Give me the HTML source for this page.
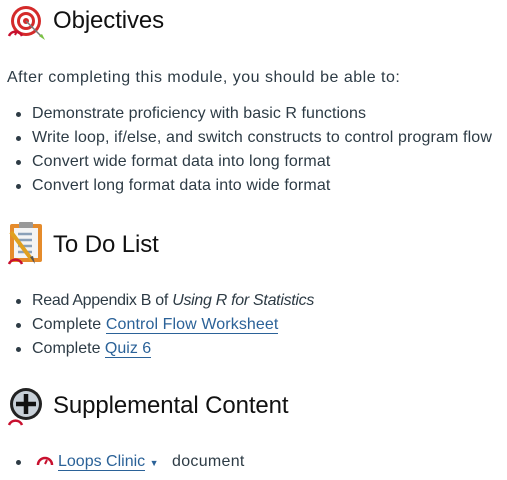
<!DOCTYPE html>
<html><head><style>
body{margin:0;width:507px;height:480px;background:#fff;font-family:"Liberation Sans",sans-serif;color:#2d3b45;position:relative;overflow:hidden}
.t{position:absolute;white-space:nowrap;font-size:16px;letter-spacing:0.1px}
.h{position:absolute;white-space:nowrap;font-size:24px;color:#111;letter-spacing:-0.1px}
.b{position:absolute;width:5px;height:5px;border-radius:50%;background:#2d3b45}
a{color:#2b6298;text-decoration:none;border-bottom:1px solid #2b6298}
</style></head><body>
<svg style="position:absolute;left:6px;top:3px" width="42" height="40" viewBox="0 0 42 40">
<circle cx="20" cy="18" r="15" fill="#d42a2a"/><circle cx="20" cy="18" r="12" fill="#fff"/><circle cx="20" cy="18" r="9" fill="#d42a2a"/><circle cx="20" cy="18" r="6" fill="#fff"/><circle cx="20" cy="18" r="3" fill="#d42a2a"/>
<path d="M20 18 L36 34" stroke="#777" stroke-width="1.5"/><path d="M33 33 L39 37 L36 31Z" fill="#7ac143"/>
<path d="M3 33 A7 7 0 0 1 16 33" stroke="#c8102e" stroke-width="2.5" fill="none"/><path d="M9 32 L11 28" stroke="#c8102e" stroke-width="2"/>
</svg>
<div class="h" style="left:53px;top:7px">Objectives</div>
<div class="t" style="left:7px;top:69px;letter-spacing:0.5px">After completing this module, you should be able to:</div>
<div class="b" style="left:16px;top:112px"></div><div class="t" style="left:32px;top:105px;letter-spacing:0.05px">Demonstrate proficiency with basic R functions</div>
<div class="b" style="left:16px;top:136px"></div><div class="t" style="left:32px;top:129px;letter-spacing:0.13px">Write loop, if/else, and switch constructs to control program flow</div>
<div class="b" style="left:16px;top:160px"></div><div class="t" style="left:32px;top:153px;letter-spacing:0.12px">Convert wide format data into long format</div>
<div class="b" style="left:16px;top:184px"></div><div class="t" style="left:32px;top:177px;letter-spacing:0.12px">Convert long format data into wide format</div>
<svg style="position:absolute;left:6px;top:220px" width="42" height="46" viewBox="0 0 42 46">
<rect x="4" y="4" width="32" height="38" rx="2" fill="#e58b2b"/><rect x="8" y="8" width="24" height="30" fill="#f4f4f4"/><rect x="13" y="2" width="14" height="6" rx="1" fill="#999"/>
<g stroke="#8aa0b8" stroke-width="2.5"><path d="M12 14h14M12 20h14M12 26h14M12 32h14"/></g>
<path d="M5 12 L26 40" stroke="#e0a020" stroke-width="4"/><path d="M24 37 L29 44 L27 36Z" fill="#555"/>
<path d="M3 44 A7 7 0 0 1 16 44" stroke="#c8102e" stroke-width="2.5" fill="none"/>
</svg>
<div class="h" style="left:53px;top:231px">To Do List</div>
<div class="b" style="left:16px;top:299px"></div><div class="t" style="left:32px;top:292px;letter-spacing:-0.3px">Read Appendix B of <i>Using R for Statistics</i></div>
<div class="b" style="left:16px;top:323px"></div><div class="t" style="left:32px;top:316px">Complete <a>Control Flow Worksheet</a></div>
<div class="b" style="left:16px;top:347px"></div><div class="t" style="left:32px;top:340px;letter-spacing:0">Complete <a>Quiz 6</a></div>
<svg style="position:absolute;left:6px;top:386px" width="42" height="40" viewBox="0 0 42 40">
<circle cx="20" cy="18" r="16" fill="#222"/><circle cx="20" cy="18" r="13" fill="#c8d0d8"/><path d="M20 8v20M10 18h20" stroke="#111" stroke-width="4.5"/>
<path d="M3 39 A7 7 0 0 1 16 39" stroke="#c8102e" stroke-width="2.5" fill="none"/>
</svg>
<div class="h" style="left:53px;top:392px">Supplemental Content</div>
<div class="b" style="left:16px;top:460px"></div>
<svg style="position:absolute;left:36px;top:455px" width="18" height="12" viewBox="0 0 18 12"><path d="M2 10 A7 7 0 0 1 16 10" stroke="#c8102e" stroke-width="2.5" fill="none"/><path d="M9 9 L11 5" stroke="#c8102e" stroke-width="2"/></svg>
<div class="t" style="left:58px;top:453px;letter-spacing:0"><a>Loops Clinic</a> <span style="font-size:9px;color:#2b6298">▼</span></div>
<div class="t" style="left:172px;top:453px;letter-spacing:0.3px">document</div>
</body></html>
